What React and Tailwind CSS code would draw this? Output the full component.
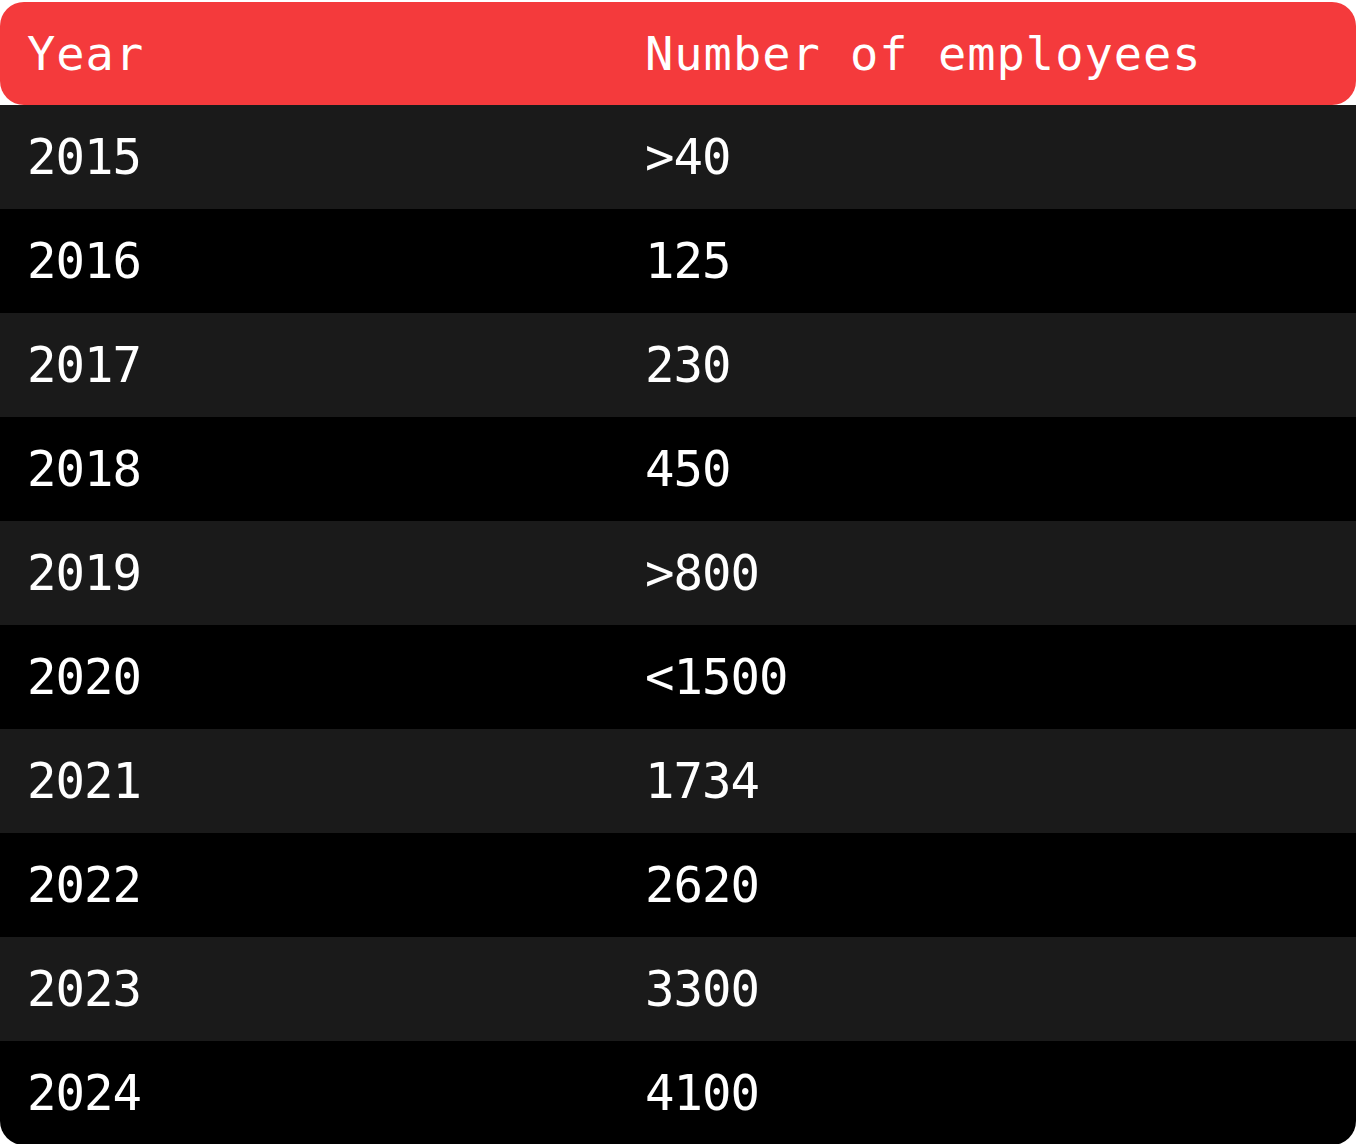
import React from "react";

const rows = [
  ["2015", ">40"],
  ["2016", "125"],
  ["2017", "230"],
  ["2018", "450"],
  ["2019", ">800"],
  ["2020", "<1500"],
  ["2021", "1734"],
  ["2022", "2620"],
  ["2023", "3300"],
  ["2024", "4100"],
];

const font = { fontFamily: '"DejaVu Sans Mono", "Liberation Mono", monospace' };

export default function App() {
  return (
    <div className="bg-white w-[1357px] h-[1144px] pt-[2px]" style={font}>
      <div className="w-[1356px] flex flex-col">
        <div className="h-[103px] bg-[#f43a3c] rounded-[24px] grid grid-cols-[618px_1fr] items-center px-[27px] text-white text-[47px] tracking-[1px] leading-none">
          <div>Year</div>
          <div>Number of employees</div>
        </div>
        <div className="flex flex-col rounded-b-[24px] overflow-hidden">
          {rows.map(([y, n], i) => (
            <div
              key={y}
              className={`h-[104px] grid grid-cols-[618px_1fr] items-center px-[27px] text-white text-[49px] tracking-[-1px] leading-none ${
                i % 2 === 0 ? "bg-[#1a1a1a]" : "bg-black"
              }`}
            >
              <div>{y}</div>
              <div>{n}</div>
            </div>
          ))}
        </div>
      </div>
    </div>
  );
}
